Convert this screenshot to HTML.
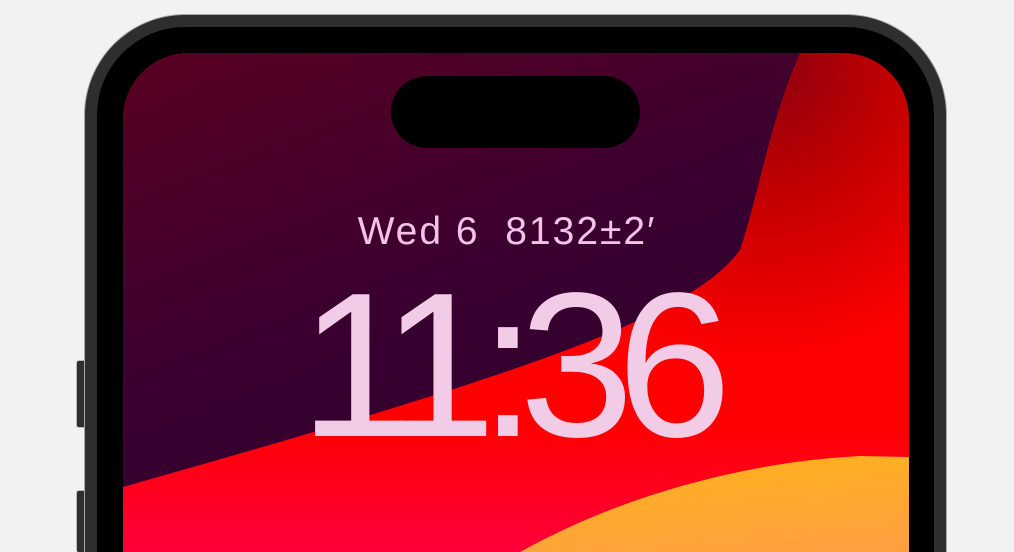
<!DOCTYPE html>
<html><head><meta charset="utf-8"><style>
html,body{margin:0;padding:0;width:1014px;height:552px;overflow:hidden;}
body{background:#f2f2f2;position:relative;font-family:"Liberation Sans",sans-serif;}
.btn{position:absolute;left:77px;width:9px;background:#2e2e2e;border-radius:2px 0 0 2px;box-shadow:0 0 0 1px #bbb;}
.frame{position:absolute;left:85px;top:15px;width:861px;height:537px;border-radius:100px 100px 0 0;background:#2e2e2e;box-shadow:0 0 0 1px #aaa;}
.bezel{position:absolute;left:97px;top:27px;width:837px;height:525px;border-radius:88px 88px 0 0;background:#000;}
.screen{position:absolute;left:123px;top:53px;width:786px;height:499px;border-radius:66px 66px 0 0;overflow:hidden;}
.island{position:absolute;left:391px;top:76px;width:249px;height:72px;border-radius:36px;background:#000;}
.date{position:absolute;left:0;width:1014px;top:210px;text-align:center;font-size:39px;color:#f3c3e6;letter-spacing:2px;}
.time{position:absolute;left:0;width:1014px;top:262px;text-align:center;font-size:206px;line-height:206px;color:#f2cbe6;letter-spacing:-17px;}
</style></head><body>
<div class="btn" style="top:361px;height:66px"></div>
<div class="btn" style="top:491px;height:61px"></div>
<div class="frame"></div>
<div class="bezel"></div>
<div class="screen">
<svg width="786" height="499" viewBox="123 53 786 499">
<defs>
<radialGradient id="rtop" cx="760" cy="60" r="300" gradientUnits="userSpaceOnUse">
<stop offset="0" stop-color="#8a0010"/><stop offset="0.5" stop-color="#c80000"/><stop offset="1" stop-color="#ff0000"/>
</radialGradient>
<linearGradient id="dark" x1="0" y1="0" x2="0.6" y2="1">
<stop offset="0" stop-color="#5a0022"/><stop offset="0.6" stop-color="#3a0030"/><stop offset="1" stop-color="#30002e"/>
</linearGradient>
<linearGradient id="pink" x1="0" y1="0" x2="0" y2="1">
<stop offset="0" stop-color="#ff0000"/><stop offset="1" stop-color="#ff0045"/>
</linearGradient>
<linearGradient id="orange" x1="0" y1="0" x2="0.3" y2="1">
<stop offset="0" stop-color="#ffb31a"/><stop offset="1" stop-color="#ffa040"/>
</linearGradient>
</defs>
<rect x="123" y="53" width="786" height="499" fill="url(#rtop)"/>
<path d="M123,420 C400,440 700,420 909,430 L909,560 L123,560Z" fill="url(#pink)" opacity="0.9"/>
<path d="M123,53 L800,53 C770,120 760,190 740,250 C690,320 500,380 123,487 Z" fill="url(#dark)"/>
<path d="M490,570 C600,500 740,462 860,456 L909,457 L909,570 Z" fill="url(#orange)"/>
</svg>
</div>
<div class="island"></div>
<div class="date">Wed 6&nbsp; 8132±2′</div>
<div class="time">11:36</div>
</body></html>
